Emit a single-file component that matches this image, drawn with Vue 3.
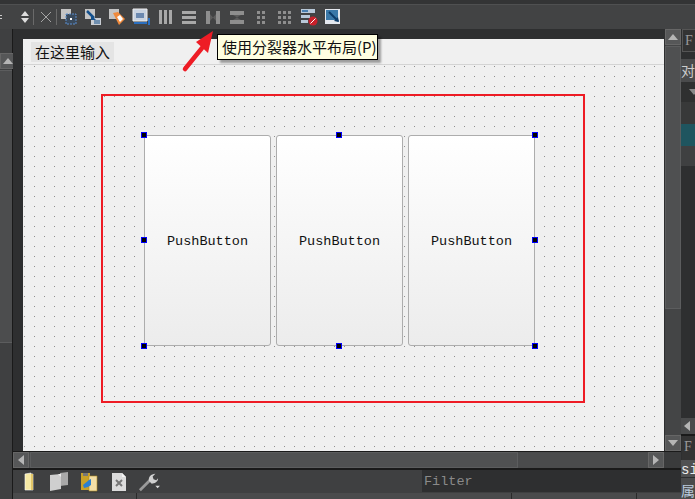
<template>
  <div class="app">
    <div class="menu-edge"></div>
    <div class="toolbar">
      <span class="grip"></span>
      <svg class="updown" viewBox="0 0 10 16"><path d="M5 2l4 5H1zM5 14l4-5H1z" fill="#ddd" /></svg>
      <span class="sep"></span>
      <svg class="close-x" viewBox="0 0 14 16"><path d="M2 3l10 10M12 3L2 13" stroke="#a5a5a5" fill="none" /></svg>
      <span class="sep"></span>
      <svg v-for="t in tools" :key="t" class="tool" viewBox="0 0 18 18" v-html="t"></svg>
    </div>

    <div class="middle">
      <div class="left-dock">
        <div class="scroll-btn left-btn"><i class="arrow up"></i></div>
        <div class="left-thumb"></div>
      </div>

      <div class="center">
        <div class="view-row">
          <div class="canvas">
            <div class="menubar"><span class="type-here">在这里输入</span></div>
            <div class="form">
              <div class="red-box">
                <div class="splitter">
                  <button v-for="n in 3" :key="n" class="push">PushButton</button>
                  <i v-for="h in handles" :key="h" class="handle" :class="h"></i>
                </div>
              </div>
            </div>
          </div>
          <div class="vscroll">
            <div class="scroll-btn"><i class="arrow up"></i></div>
            <div class="vthumb"></div>
            <div class="scroll-btn"><i class="arrow down"></i></div>
          </div>
        </div>
        <div class="hscroll">
          <div class="scroll-btn"><i class="arrow left"></i></div>
          <div class="hthumb"></div>
          <div class="scroll-btn"><i class="arrow right"></i></div>
          <div class="corner"></div>
        </div>
        <div class="action-bar">
          <svg class="act" viewBox="0 0 20 20">
            <path d="M6 2l6-1v1h2v16H6z" fill="#f6e9a4" stroke="#fff" stroke-width="0.6" />
            <path d="M12 2h2v16h-2z" fill="#e2c66a" />
          </svg>
          <svg class="act" viewBox="0 0 20 20">
            <path d="M11 1l8-1v13l-8 1z" fill="#a9a9a9" />
            <path d="M1 3l11-1v15L1 19z" fill="#cfcfcf" />
            <path d="M9 2h3v3z" fill="#eee" />
          </svg>
          <svg class="act" viewBox="0 0 20 20">
            <path d="M2 1h9v17H2z" fill="#c9a227" />
            <path d="M4 1h5v3H4z" fill="#777" />
            <path d="M10 4h8v15h-8z" fill="#f3dfa8" stroke="#b08a20" stroke-width="0.6" />
            <path d="M4 13l6-5 2-1v6l-3 2-4 1z" fill="#2a7fd0" />
          </svg>
          <svg class="act" viewBox="0 0 20 20">
            <path d="M3 1h10l4 4v14H3z" fill="#dcdcdc" />
            <path d="M13 1v4h4z" fill="#f4f4f4" />
            <path d="M7 8l6 6M13 8l-6 6" stroke="#777" stroke-width="2" />
          </svg>
          <svg class="act wrench" viewBox="0 0 24 22">
            <path d="M2 20L13 9" stroke="#9a9a9a" stroke-width="3" />
            <path d="M12 10c-1-4 2-8 7-8l-3 3 1 3 3 1 2-2c0 4-4 6-7 6z" fill="#d0d0d0" />
            <path d="M19 15h5l-2.500 3z" fill="#ddd" />
          </svg>
          <input class="filter" placeholder="Filter" />
        </div>
        <div class="status-row">
          <span class="seg-a"></span>
          <span class="seg-b"></span>
          <span class="seg-c"></span>
        </div>
      </div>

      <div class="right-dock">
        <div class="find">F</div>
        <div class="obj-head">对</div>
        <div class="obj-row arrow-row"><i class="arrow down dim"></i></div>
        <div class="obj-row"></div>
        <div class="obj-row teal"></div>
        <div class="obj-row alt"></div>
        <div class="obj-fill"></div>
        <div class="dock-scroll"><i class="arrow left"></i></div>
        <div class="find low">F</div>
        <div class="si">si</div>
        <div class="prop">属</div>
      </div>
    </div>

    <div class="tip">使用分裂器水平布局(P)</div>
    <svg class="red-arrow" viewBox="0 0 40 50">
      <path d="M5 41L22 20" stroke="#ee1c25" stroke-width="4.500" stroke-linecap="round" />
      <path d="M33 3L28 25 16 14z" fill="#ee1c25" />
    </svg>
  </div>
</template>

<script setup>
// toolbar icons, in the order they appear
const tools = [
  '<path d="M1 1h10v10H1z" fill="#c4c4c4"/><path d="M6 6h10v10H6z" fill="#3a4a5c" stroke="#5b8fd0" stroke-dasharray="2 1"/><path d="M10 10h2v2h-2z" fill="#fff"/>',
  '<path d="M1 1h10v10H1z" fill="#c4c4c4"/><path d="M7 10h10v7H7z" fill="#c8ccd2"/><path d="M3 3l7 7" stroke="#14508c" stroke-width="2.500"/><path d="M7 7v5h5z" fill="#14508c"/><path d="M10 13h6M10 15h6" stroke="#14508c"/>',
  '<path d="M1 1h10v10H1z" fill="#c4c4c4"/><path d="M5 5l5-1 7 7-6 6z" fill="#f08a3c"/><path d="M9 9l3-2 3 4-3 3z" fill="#fff"/>',
  '<path d="M1 1h14v12H1z" fill="#c8d2e0" stroke="#eee"/><path d="M4 5h8v5H4z" fill="#6a88b0"/><path d="M2 15h13" stroke="#2a6fc0" stroke-width="2"/><path d="M17 10v7" stroke="#2a6fc0" stroke-width="2"/>',
  '<path d="M3 2h3v14H3zM8 2h3v14H8zM13 2h3v14h-3z" fill="#a8a8a8"/>',
  '<path d="M2 3h14v3H2zM2 8h14v3H2zM2 13h14v3H2z" fill="#a8a8a8"/>',
  '<path d="M2 3h4v13H2zM12 3h4v13h-4z" fill="#8e8e8e"/><path d="M6 6l3 3.500-3 3.500zM12 6l-3 3.500 3 3.500z" fill="#5d5d5d"/>',
  '<path d="M2 3h14v4H2zM2 12h14v4H2z" fill="#8e8e8e"/><path d="M5 7l4 2.500 4-2.500zM5 12l4-2.500 4 2.500z" fill="#5d5d5d"/>',
  '<path d="M5 3h3v3H5zM10 3h3v3h-3zM5 8h3v3H5zM10 8h3v3h-3zM5 13h3v3H5zM10 13h3v3h-3z" fill="#8e8e8e"/>',
  '<path d="M2 3h3v3H2zM7 3h3v3H7zM12 3h3v3h-3zM2 8h3v3H2zM7 8h3v3H7zM12 8h3v3h-3zM2 13h3v3H2zM7 13h3v3H7zM12 13h3v3h-3z" fill="#8e8e8e"/>',
  '<path d="M1 1h14v4H1zM1 7h9v3H1zM1 12h7v3H1z" fill="#b8c8d8"/><path d="M2 2h6v2H2z" fill="#4a7fb0"/><circle cx="13" cy="13" r="4.500" fill="#c8202a"/><path d="M10.500 15.500l5-5" stroke="#fff"/>',
  '<path d="M1 1h15v15H1z" fill="#e4e8ee"/><path d="M2 2h12v10H2z" fill="#3a78a8"/><path d="M5 4l9 9" stroke="#0c3c68" stroke-width="2"/><path d="M15 14l-5-1 4-4z" fill="#0c3c68"/>',
]

const handles = ['tl', 'tc', 'tr', 'ml', 'mr', 'bl', 'bc', 'br']
</script>

<style>
html,
body {
  margin: 0;
  overflow: hidden;
}
</style>

<style scoped>
.app {
  position: relative;
  width: 695px;
  height: 499px;
  overflow: hidden;
  display: flex;
  flex-direction: column;
  background: #3a3b3c;
  font-family: "Liberation Mono", "Noto Sans CJK SC", monospace;
}

.menu-edge {
  height: 4px;
  background: #333435;
  border-bottom: 1px solid #4f5051;
}

.toolbar {
  height: 24px;
  display: flex;
  align-items: center;
  background: #424344;
  overflow: hidden;
}

.grip {
  width: 2px;
  height: 2px;
  border-top: 1px solid #ccc;
  border-bottom: 1px solid #ccc;
}

.updown {
  width: 10px;
  height: 16px;
  margin-left: 18px;
}

.sep {
  width: 1px;
  height: 16px;
  margin-left: 3px;
  background: #6a6a6a;
}

.close-x {
  width: 14px;
  height: 16px;
  margin-left: 5px;
}

.close-x + .sep {
  margin-right: 3px;
}

.tool {
  width: 18px;
  height: 18px;
  margin-right: 6px;
  flex: none;
}

.middle {
  flex: 1;
  min-height: 0;
  display: flex;
}

.left-dock {
  width: 12px;
  padding-top: 24px;
  background: #3f4041;
  border-right: 1px solid #1a1a1a;
  flex: none;
}

.left-btn {
  width: 12px;
}

.left-thumb {
  height: 271px;
  margin-top: 1px;
  background: #4c4d4e;
  border-top: 1px solid #5c5d5e;
  border-bottom: 1px solid #5c5d5e;
}

.center {
  flex: 1;
  min-width: 0;
  display: flex;
  flex-direction: column;
  background: #2e2f30;
}

.view-row {
  flex: 1;
  min-height: 0;
  display: flex;
}

.canvas {
  flex: 1;
  margin: 10px 0 0 10px;
  background: #f0f0f0;
  display: flex;
  flex-direction: column;
}

.menubar {
  height: 26px;
  flex: none;
  padding-top: 3px;
  box-sizing: border-box;
  border-bottom: 1px solid #d4d4d4;
}

.type-here {
  display: block;
  width: 83px;
  height: 20px;
  margin-left: 8px;
  box-sizing: border-box;
  padding-left: 4px;
  line-height: 20px;
  background: #e4e4e4;
  font-size: 15px;
  color: #111;
  font-family: "Noto Sans CJK SC", sans-serif;
}

.form {
  flex: 1;
  padding: 29px 0 0 78px;
  background-color: #f0f0f0;
  background-image: radial-gradient(circle at 1.500px 1.500px, #909090 0.7px, transparent 0.8px);
  background-size: 10px 10px;
}

.red-box {
  width: 484px;
  height: 309px;
  box-sizing: border-box;
  border: 2px solid #ee1c25;
  padding: 39px 0 0 41px;
}

.splitter {
  position: relative;
  display: flex;
  gap: 5px;
  width: 391px;
  height: 211px;
}

.push {
  flex: 1;
  margin: 0;
  padding: 2px 0 0;
  border: 1px solid #adadad;
  border-radius: 3px;
  background: linear-gradient(#ffffff, #ececec);
  font-family: "Liberation Mono", "DejaVu Sans Mono", monospace;
  font-size: 13.500px;
  color: #111;
}

.handle {
  position: absolute;
  width: 4px;
  height: 4px;
  background: #000;
  border: 1px solid #0000ff;
}

.tl { left: -3px; top: -3px; }
.tc { left: 192px; top: -3px; }
.tr { right: -3px; top: -3px; }
.ml { left: -3px; top: 102px; }
.mr { right: -3px; top: 102px; }
.bl { left: -3px; bottom: -3px; }
.bc { left: 192px; bottom: -3px; }
.br { right: -3px; bottom: -3px; }

.vscroll {
  width: 16px;
  margin-left: 1px;
  display: flex;
  flex-direction: column;
  background: #444546;
}

.vscroll .scroll-btn:last-child {
  margin-top: auto;
}

.scroll-btn {
  height: 16px;
  width: 16px;
  flex: none;
  display: flex;
  align-items: center;
  justify-content: center;
  background: #565758;
  border: 1px solid #666;
  box-sizing: border-box;
}

.vthumb {
  height: 261px;
  margin-top: 1px;
  background: #4f5051;
  border: 1px solid #5c5d5e;
}

.arrow {
  display: block;
  width: 0;
  height: 0;
  border: 5px solid transparent;
}

.arrow.up {
  border-bottom: 6px solid #b5b5b5;
  border-top: 0;
}

.arrow.down {
  border-top: 6px solid #b5b5b5;
  border-bottom: 0;
}

.arrow.left {
  border-right: 6px solid #b5b5b5;
  border-left: 0;
}

.arrow.right {
  border-left: 6px solid #b5b5b5;
  border-right: 0;
}

.arrow.dim {
  border-top-color: #888;
}

.hscroll {
  height: 16px;
  flex: none;
  display: flex;
  border-top: 1px solid #1a1a1a;
  background: #4a4b4c;
}

.hthumb {
  width: 486px;
  margin: 0 auto 0 1px;
  background: #505152;
  border: 1px solid #5c5d5e;
}

.corner {
  width: 17px;
  background: #3a3b3c;
}

.action-bar {
  height: 23px;
  flex: none;
  display: flex;
  align-items: center;
  padding-left: 6px;
  border-top: 2px solid #1a1a1a;
  background: #3f4041;
}

.act {
  width: 20px;
  height: 20px;
  margin-right: 10px;
  flex: none;
}

.act.wrench {
  width: 22px;
  margin: 0 0 0 -1px;
}

.filter {
  width: 259px;
  height: 22px;
  margin: 0 0 1px auto;
  padding: 0 2px;
  box-sizing: border-box;
  border: 0;
  background: #2e2f30;
  font-family: "Liberation Mono", monospace;
  font-size: 13.500px;
}

.filter::placeholder {
  color: #8a8a8a;
}

.status-row {
  height: 6px;
  display: flex;
  background: #4a4b4c;
}

.status-row span {
  box-sizing: border-box;
  border-right: 1px solid #2a2a2a;
}

.seg-a {
  width: 124px;
}

.seg-b {
  width: 375px;
}

.seg-c {
  width: 125px;
}

.right-dock {
  width: 14px;
  flex: none;
  display: flex;
  flex-direction: column;
  background: #2e2f30;
  overflow: hidden;
  font-size: 14px;
  color: #ccc;
}

.find {
  height: 23px;
  line-height: 21px;
  padding-left: 2px;
  box-sizing: border-box;
  border: 1px solid #555;
  border-right: 0;
  margin-left: 1px;
  background: #333;
  color: #999;
  margin-bottom: 7px;
  font-family: "Liberation Serif", serif;
}

.obj-head {
  height: 23px;
  line-height: 23px;
  background: #4a4b4c;
  font-family: "Noto Sans CJK SC", sans-serif;
}

.obj-row {
  height: 22px;
  background: #383939;
}

.arrow-row {
  height: 20px;
  display: flex;
  align-items: center;
  padding-left: 8px;
  background: #2f3030;
}

.teal {
  background: #1f555f;
}

.alt {
  height: 20px;
  background: #3f4041;
}

.obj-fill {
  flex: 1;
  background: #2e2f30;
}

.dock-scroll {
  height: 16px;
  display: flex;
  align-items: center;
  padding-left: 3px;
  background: #4a4b4c;
  border-bottom: 2px solid #1a1a1a;
}

.low {
  margin: 0 0 0 1px;
  height: 24px;
  line-height: 22px;
  flex: none;
  border: 0;
}

.si {
  height: 17px;
  line-height: 20px;
  background: #505152;
  color: #eee;
  flex: none;
}

.prop {
  height: 21px;
  line-height: 24px;
  margin-top: 1px;
  color: #bcd;
  background: #4a4b4c;
  font-family: "Noto Sans CJK SC", sans-serif;
  flex: none;
}

.tip {
  position: absolute;
  left: 217px;
  top: 34px;
  width: 161px;
  height: 26px;
  padding-left: 4px;
  line-height: 24px;
  box-sizing: border-box;
  background: #ffffe1;
  border: 1px solid #000;
  box-shadow: 3px 3px 2px rgba(0, 0, 0, 0.35);
  font-family: "Noto Sans CJK SC", sans-serif;
  font-size: 15px;
  color: #111;
  white-space: nowrap;
}

.red-arrow {
  position: absolute;
  left: 180px;
  top: 28px;
  width: 40px;
  height: 50px;
}
</style>
